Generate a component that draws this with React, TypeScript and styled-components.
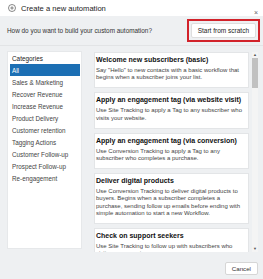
import React from 'react';
import styled, { createGlobalStyle } from 'styled-components';

const GlobalStyle = createGlobalStyle`
  html, body {
    margin: 0;
    padding: 0;
    background: #eef0f2;
    font-family: "Liberation Sans", Arial, sans-serif;
  }
`;

const categories = [
  'All',
  'Sales & Marketing',
  'Recover Revenue',
  'Increase Revenue',
  'Product Delivery',
  'Customer retention',
  'Tagging Actions',
  'Customer Follow-up',
  'Prospect Follow-up',
  'Re-engagement',
];

const recipes = [
  {
    title: 'Welcome new subscribers (basic)',
    text: 'Say "Hello" to new contacts with a basic workflow that begins when a subscriber joins your list.',
  },
  {
    title: 'Apply an engagement tag (via website visit)',
    text: 'Use Site Tracking to apply a Tag to any subscriber who visits your website.',
  },
  {
    title: 'Apply an engagement tag (via conversion)',
    text: 'Use Conversion Tracking to apply a Tag to any subscriber who completes a purchase.',
  },
  {
    title: 'Deliver digital products',
    text: 'Use Conversion Tracking to deliver digital products to buyers. Begins when a subscriber completes a purchase, sending follow up emails before ending with simple automation to start a new Workflow.',
  },
  {
    title: 'Check on support seekers',
    text: 'Use Site Tracking to follow up with subscribers who visit your support pages.',
  },
];

const Dialog = styled.div`
  width: 263px;
  height: 279px;
  display: flex;
  flex-direction: column;
  background: #eef0f2;
  overflow: hidden;
`;

const TitleBar = styled.div`
  height: 16px;
  flex-shrink: 0;
  background: #ffffff;
  display: flex;
  align-items: center;
  padding: 0 5px 0 8px;
  gap: 5px;
  font-size: 7.6px;
  color: #222;
`;

const Title = styled.span`
  flex: 1;
`;

const Close = styled.span`
  font-size: 7px;
  color: #666;
  align-self: flex-end;
  line-height: 7px;
`;

const Toolbar = styled.div`
  display: flex;
  align-items: center;
  justify-content: space-between;
  padding: 0 3px 0 7px;
  height: 30px;
  flex-shrink: 0;
  box-sizing: border-box;
  border-bottom: 1px solid #e2e4e6;
`;

const Prompt = styled.span`
  font-size: 6.4px;
  color: #333;
`;

const Highlight = styled.div`
  border: 2px solid #d2222a;
  padding: 2px;
  display: flex;
`;

const ScratchButton = styled.button`
  font-family: inherit;
  font-size: 6.5px;
  color: #222;
  background: #fff;
  border: 1px solid #dedede;
  border-radius: 2px;
  height: 15px;
  padding: 0 6px;
`;

const Body = styled.div`
  display: flex;
  gap: 13px;
  padding: 6px 5px 0 8px;
  flex-shrink: 0;
`;

const Sidebar = styled.div`
  width: 73px;
  height: 196px;
  background: #fff;
  display: flex;
  flex-direction: column;
  padding: 3px 1px 0 2px;
  box-sizing: border-box;
  box-shadow: 0 0 0 1px #e6e8ea;
`;

const SideHeading = styled.div`
  font-size: 6.4px;
  color: #222;
  padding: 0 0 3px 2px;
  height: 6px;
`;

const SideItem = styled.div<{ $active?: boolean }>`
  height: 12px;
  display: flex;
  align-items: center;
  padding-left: 2px;
  font-size: 6.3px;
  white-space: nowrap;
  color: ${p => (p.$active ? '#fff' : '#444')};
  background: ${p => (p.$active ? '#1c6fb4' : 'transparent')};
`;

const ListArea = styled.div`
  flex: 1;
  display: flex;
  gap: 3px;
  height: 200px;
`;

const CardList = styled.div`
  flex: 1;
  display: flex;
  flex-direction: column;
  gap: 4px;
  overflow: hidden;
`;

const Card = styled.div`
  background: #fff;
  border: 1px solid #e3e5e7;
  padding: 3px 1px 6px 1px;
  flex-shrink: 0;
`;

const CardTitle = styled.div`
  font-size: 7px;
  line-height: 8px;
  font-weight: bold;
  color: #111;
  white-space: nowrap;
  margin-bottom: 3px;
`;

const CardText = styled.div`
  font-size: 6px;
  line-height: 7.2px;
  color: #444;
  padding-right: 3px;
`;

const Scrollbar = styled.div`
  width: 6px;
  display: flex;
  flex-direction: column;
  align-items: center;
  background: #f4f4f4;
`;

const Arrow = styled.div`
  height: 6px;
  font-size: 4px;
  color: #555;
  line-height: 6px;
`;

const Thumb = styled.div`
  width: 6px;
  height: 30px;
  background: #c1c1c1;
`;

const Track = styled.div`
  flex: 1;
`;

const Footer = styled.div`
  flex: 1;
  display: flex;
  justify-content: flex-end;
  align-items: center;
  padding: 6px 5px 0 0;
`;

const CancelButton = styled.button`
  font-family: inherit;
  font-size: 6.2px;
  color: #333;
  background: #fff;
  border: 1px solid #d6d6d6;
  border-radius: 2px;
  height: 13px;
  padding: 0 6px;
`;

const PlusIcon = () => (
  <svg width="8" height="8" viewBox="0 0 16 16">
    <circle cx="8" cy="8" r="7" fill="none" stroke="#555" strokeWidth="1.4" />
    <path d="M8 4.5v7M4.5 8h7" stroke="#555" strokeWidth="1.4" />
  </svg>
);

export default function App() {
  return (
    <Dialog>
      <GlobalStyle />
      <TitleBar>
        <PlusIcon />
        <Title>Create a new automation</Title>
        <Close>×</Close>
      </TitleBar>
      <Toolbar>
        <Prompt>How do you want to build your custom automation?</Prompt>
        <Highlight>
          <ScratchButton>Start from scratch</ScratchButton>
        </Highlight>
      </Toolbar>
      <Body>
        <Sidebar>
          <SideHeading>Categories</SideHeading>
          {categories.map((c, i) => (
            <SideItem key={c} $active={i === 0}>
              {c}
            </SideItem>
          ))}
        </Sidebar>
        <ListArea>
          <CardList>
            {recipes.map(r => (
              <Card key={r.title}>
                <CardTitle>{r.title}</CardTitle>
                <CardText>{r.text}</CardText>
              </Card>
            ))}
          </CardList>
          <Scrollbar>
            <Arrow>▲</Arrow>
            <Thumb />
            <Track />
            <Arrow>▼</Arrow>
          </Scrollbar>
        </ListArea>
      </Body>
      <Footer>
        <CancelButton>Cancel</CancelButton>
      </Footer>
    </Dialog>
  );
}
